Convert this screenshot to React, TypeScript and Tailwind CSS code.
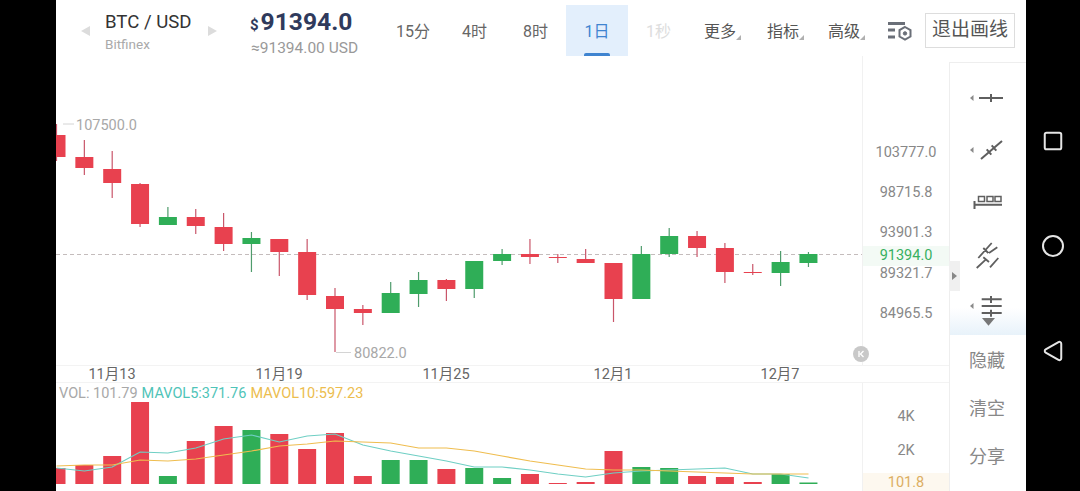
import React from 'react';
import { Circle, Square, Triangle } from 'lucide-react';

const FONT = { fontFamily: 'Roboto, "Noto Sans CJK SC", sans-serif' };

const RED = '#e8414f';
const GREEN = '#2fae57';

// wickTop, bodyTop, bodyBottom, wickBottom, up
type Candle = [number, number, number, number, boolean];

const CANDLES: Candle[] = [
  [124, 135, 157, 161, false],
  [140, 157, 168, 175, false],
  [151, 169, 183, 198, false],
  [183, 184, 224, 227, false],
  [207, 217, 225, 225, true],
  [209, 217, 226, 234, false],
  [213, 227, 244, 251, false],
  [232, 238, 244, 272, true],
  [239, 239, 252, 276, false],
  [239, 252, 295, 300, false],
  [288, 296, 309, 352, false],
  [305, 309, 313, 325, false],
  [282, 293, 313, 313, true],
  [272, 280, 294, 307, true],
  [279, 280, 289, 301, false],
  [261, 261, 289, 298, true],
  [249, 254, 261, 265, true],
  [239, 254, 257, 264, false],
  [254, 257, 258, 263, false],
  [249, 259, 263, 263, false],
  [263, 263, 299, 322, false],
  [246, 254, 299, 299, true],
  [228, 236, 254, 257, true],
  [231, 236, 248, 257, false],
  [243, 248, 272, 283, false],
  [264, 272, 273, 275, false],
  [251, 262, 273, 286, true],
  [252, 254, 263, 267, true],
];

const VOLUME_TOPS = [
  468, 465, 456, 402, 476, 441, 426, 430, 434, 449, 433, 476, 460, 460, 469, 468, 478, 474, 483, 482, 451, 467, 468, 476,
  477, 482, 474, 482.5,
];

const MA5 = [
  468, 471, 467, 452, 453, 448, 439, 435, 442, 436, 434, 445, 451, 456, 461, 467, 467, 470, 474, 477, 473, 471, 470, 469,
  468, 474, 474, 478,
];

const MA10 = [
  466, 465, 465, 460, 461, 459, 455, 451, 446, 444, 441, 442, 443, 448, 448, 451, 456, 461, 465, 469, 470, 470, 471, 472,
  473, 474, 474, 474,
];

const candleX = (i: number) => 0.5 + 27.85 * i;

const maPoints = (values: number[]) => values.map((y, i) => `${candleX(i).toFixed(1)},${y}`).join(' ');

const PRICE_LABELS = [
  { text: '103777.0', y: 153 },
  { text: '98715.8', y: 193 },
  { text: '93901.3', y: 233 },
  { text: '89321.7', y: 274 },
  { text: '84965.5', y: 314 },
];

const DATE_LABELS = [
  { text: '11月13', x: 56 },
  { text: '11月19', x: 223 },
  { text: '11月25', x: 390 },
  { text: '12月1', x: 557 },
  { text: '12月7', x: 724 },
];

const CandlePlot = () => (
  <svg width="806" height="309" viewBox="0 56 806 309" className="block shrink-0">
    <line x1="0" x2="806" y1="254.5" y2="254.5" stroke="#c4bcbc" strokeDasharray="4 3" />
    {CANDLES.map(([wickTop, bodyTop, bodyBottom, wickBottom, up], i) => {
      const x = candleX(i);
      const color = up ? GREEN : RED;
      return (
        <g key={i}>
          <line x1={x} x2={x} y1={wickTop} y2={wickBottom} stroke={up ? '#4f9c6c' : '#c9566a'} strokeWidth="1.2" />
          <rect x={x - 9} y={bodyTop} width="18" height={bodyBottom - bodyTop} fill={color} />
        </g>
      );
    })}
    <line x1="7" x2="18" y1="124" y2="124" stroke="#d4d4d4" />
    <line x1="280" x2="295" y1="352.5" y2="352.5" stroke="#d4d4d4" />
    <text x="20" y="130" fontSize="14.5" fill="#a8a8a8">107500.0</text>
    <text x="298" y="358" fontSize="14.5" fill="#a8a8a8">80822.0</text>
  </svg>
);

const VolumePlot = () => (
  <svg width="806" height="84" viewBox="0 401 806 84" className="block shrink-0">
    {VOLUME_TOPS.map((top, i) => (
      <rect
        key={i}
        x={candleX(i) - 9}
        y={top}
        width="18"
        height={484 - top}
        fill={CANDLES[i][4] ? GREEN : RED}
      />
    ))}
    <polyline points={maPoints(MA5)} fill="none" stroke="#6fcfc4" strokeWidth="1.2" />
    <polyline points={maPoints(MA10)} fill="none" stroke="#efbd4f" strokeWidth="1.2" />
  </svg>
);

const TinyCorner = () => (
  <svg width="5" height="5" viewBox="0 0 5 5" className="mt-3 shrink-0">
    <path d="M5 0v5H0z" fill="#b0b0b0" />
  </svg>
);

const FilterIcon = () => (
  <svg width="24" height="22" viewBox="0 0 24 22" fill="none" stroke="#6a6f78">
    <path d="M0 3.5h17M0 10h7M0 17h7" strokeWidth="3" />
    <path d="M17 7l5.5 3.2v6.3L17 19.7l-5.5-3.2v-6.3z" strokeWidth="2" />
    <circle cx="17" cy="13.4" r="1.7" fill="#6a6f78" strokeWidth="1" />
  </svg>
);

const ToolIcon = ({ children }: { children: React.ReactNode }) => (
  <svg width="40" height="32" viewBox="0 0 40 32" fill="none" stroke="#5f5f5f" strokeWidth="2" className="overflow-visible">
    {children}
  </svg>
);

const SideArrow = () => <path d="M5.5 11v6L2 14z" fill="#8a8a8a" stroke="none" />;

const Header = () => (
  <div className="flex h-[56px] shrink-0 items-start bg-white">
    <div className="ml-[25px] mt-[26px] h-0 w-0 border-y-[5px] border-r-[9px] border-y-transparent border-r-[#dcdcdc]" />
    <div className="ml-[15px] mt-[10px] w-[100px]">
      <div className="text-[18.6px] leading-[24px] text-[#333]">BTC / USD</div>
      <div className="mt-[1px] text-[13.5px] leading-[18px] text-[#aaa]">Bitfinex</div>
    </div>
    <div className="ml-[3px] mt-[26px] h-0 w-0 border-y-[5px] border-l-[9px] border-y-transparent border-l-[#dcdcdc]" />
    <div className="ml-[33px] mt-[7px] w-[130px]">
      <div className="flex items-baseline leading-[30px] text-[#2f3a5c]">
        <span className="text-[15px] font-bold">$</span>
        <span className="ml-[2px] text-[24.6px] font-bold">91394.0</span>
      </div>
      <div className="-mt-[2px] pl-[1px] text-[15.5px] leading-[20px] text-[#999]">≈91394.00 USD</div>
    </div>
    <div className="mt-[23px] ml-[16px] flex text-[16px] leading-[18px] text-[#666]">
      <span className="w-[66px]">15分</span>
      <span className="w-[61px]">4时</span>
      <span>8时</span>
    </div>
    <div className="relative ml-[18px] mt-[5px] flex h-[51px] w-[62px] shrink-0 justify-center bg-[#e3effc] pt-[18px] text-[16px] leading-[18px] text-[#3f84d0]">
      1日
      <div className="absolute bottom-0 left-[18px] h-[3px] w-[26px] rounded-t-[2px] bg-[#3f84d0]" />
    </div>
    <span className="ml-[18px] mt-[23px] text-[16px] leading-[18px] text-[#ddd]">1秒</span>
    <div className="ml-[33px] mt-[23px] flex text-[16px] leading-[18px] text-[#555]">
      <span className="flex w-[63px]">更多<TinyCorner /></span>
      <span className="flex w-[61px]">指标<TinyCorner /></span>
      <span className="flex w-[60px]">高级<TinyCorner /></span>
    </div>
    <div className="mt-[20px]">
      <FilterIcon />
    </div>
    <div className="ml-[13px] mt-[13px] flex h-[35px] w-[90px] items-center justify-center border border-[#ddd] text-[19px] text-[#555]">
      退出画线
    </div>
  </div>
);

const Toolbar = () => (
  <div className="mt-[6px] flex w-[77px] shrink-0 flex-col border-l border-t border-[#eee] bg-white">
    <div className="flex h-[272px] flex-col items-center gap-[20px] bg-gradient-to-b from-white from-[90%] to-[#e8f2fa] pt-[21px]">
      <ToolIcon>
        <SideArrow />
        <path d="M11 14h24M23 10v8" />
      </ToolIcon>
      <ToolIcon>
        <SideArrow />
        <path d="M13 23L34 5M18.7 13.3l4.6 5.4M23.7 9.3l4.6 5.4" />
      </ToolIcon>
      <ToolIcon>
        <path d="M6.5 13v8M6 16.7h28" />
        <path d="M10.5 8.5h6v5h-6zM19 8.5h6v5h-6zM27 8.5h6v5h-6z" strokeWidth="1.5" />
      </ToolIcon>
      <ToolIcon>
        <path
          d="M10.3 18L23.7 3M21 13l8.3-5.7M15.3 8l5 5M8.7 28l9-8.3M15.3 17.3L21 22M22 27.3L30.3 18"
          strokeWidth="1.8"
        />
      </ToolIcon>
      <ToolIcon>
        <SideArrow />
        <path d="M13.7 7.3h20M13.7 14h20M13.7 21h20M23 4v7M23 17.7v7" />
        <path d="M14 26h13l-6.5 7.7z" fill="#777" stroke="none" />
      </ToolIcon>
    </div>
    <div className="flex flex-col items-center gap-[20px] pr-[2px] pt-[12px] text-[18px] leading-[28px] text-[#888]">
      <span>隐藏</span>
      <span>清空</span>
      <span>分享</span>
    </div>
  </div>
);

const App = () => (
  <div className="flex h-[491px] w-[1080px] overflow-hidden bg-black" style={FONT}>
    <div className="w-[56px] shrink-0" />
    <div className="flex w-[970px] shrink-0 flex-col bg-white">
      <Header />
      <div className="flex min-h-0 flex-1">
        <div className="flex w-[893px] shrink-0 flex-col">
          <div className="relative flex h-[309px] shrink-0">
            <CandlePlot />
            <div className="relative w-[87px] border-l border-[#f1f1f1] text-[14.5px] text-[#888]">
              <span className="absolute left-0 right-0 top-[190px] bg-[#f3faf5] text-center leading-[20px] text-[#38b060]">
                91394.0
              </span>
              {PRICE_LABELS.map((label) => (
                <span
                  key={label.text}
                  className="absolute left-0 right-0 text-center leading-[18px]"
                  style={{ top: label.y - 56 - 9 }}
                >
                  {label.text}
                </span>
              ))}
            </div>
            <div className="absolute left-[797px] top-[290px] flex h-4 w-4 items-center justify-center rounded-full bg-[#c8c8c8]">
              <svg width="10" height="10" viewBox="0 0 10 10" fill="none" stroke="#fff" strokeWidth="1.3">
                <path d="M3 2v6M7.5 2L4.5 5l3 3" />
              </svg>
            </div>
            <div className="absolute -right-[11px] top-[205px] z-10 flex h-[30px] w-[11px] items-center justify-center bg-[#f0f0f0]">
              <div className="h-0 w-0 border-y-[4px] border-l-[5px] border-y-transparent border-l-[#888]" />
            </div>
          </div>
          <div className="relative h-[18px] shrink-0 border-y border-[#f3f3f3] text-[14.5px] leading-[18px] text-[#666]">
            {DATE_LABELS.map((label) => (
              <span key={label.text} className="absolute -translate-x-1/2" style={{ left: label.x }}>
                {label.text}
              </span>
            ))}
          </div>
          <div className="flex min-h-0 flex-1">
            <div className="w-[806px] shrink-0">
              <div className="flex h-[18px] gap-[4px] pl-[3px] text-[14.5px] leading-[22px] whitespace-nowrap">
                <span className="text-[#a8a8a8]">VOL: 101.79</span>
                <span className="text-[#4fc4b8]">MAVOL5:371.76</span>
                <span className="text-[#ecbd4e]">MAVOL10:597.23</span>
              </div>
              <VolumePlot />
            </div>
            <div className="flex flex-1 flex-col items-center border-l border-[#f1f1f1] text-[14.5px] text-[#888]">
              <span className="mt-[24px] leading-[20px]">4K</span>
              <span className="mt-[14px] leading-[20px]">2K</span>
              <span className="mt-[12px] w-full bg-[#fdf8ef] text-center leading-[20px] text-[#dcae62]">101.8</span>
            </div>
          </div>
        </div>
        <Toolbar />
      </div>
    </div>
    <div className="flex flex-1 flex-col items-center justify-start pt-[130px] text-[#e5e5e5]">
      <Square size={22} strokeWidth={2} absoluteStrokeWidth />
      <Circle size={24} strokeWidth={2} absoluteStrokeWidth className="mt-[82px]" />
      <Triangle size={22} strokeWidth={2} absoluteStrokeWidth className="mt-[82px] -rotate-90" />
    </div>
  </div>
);

export default App;
